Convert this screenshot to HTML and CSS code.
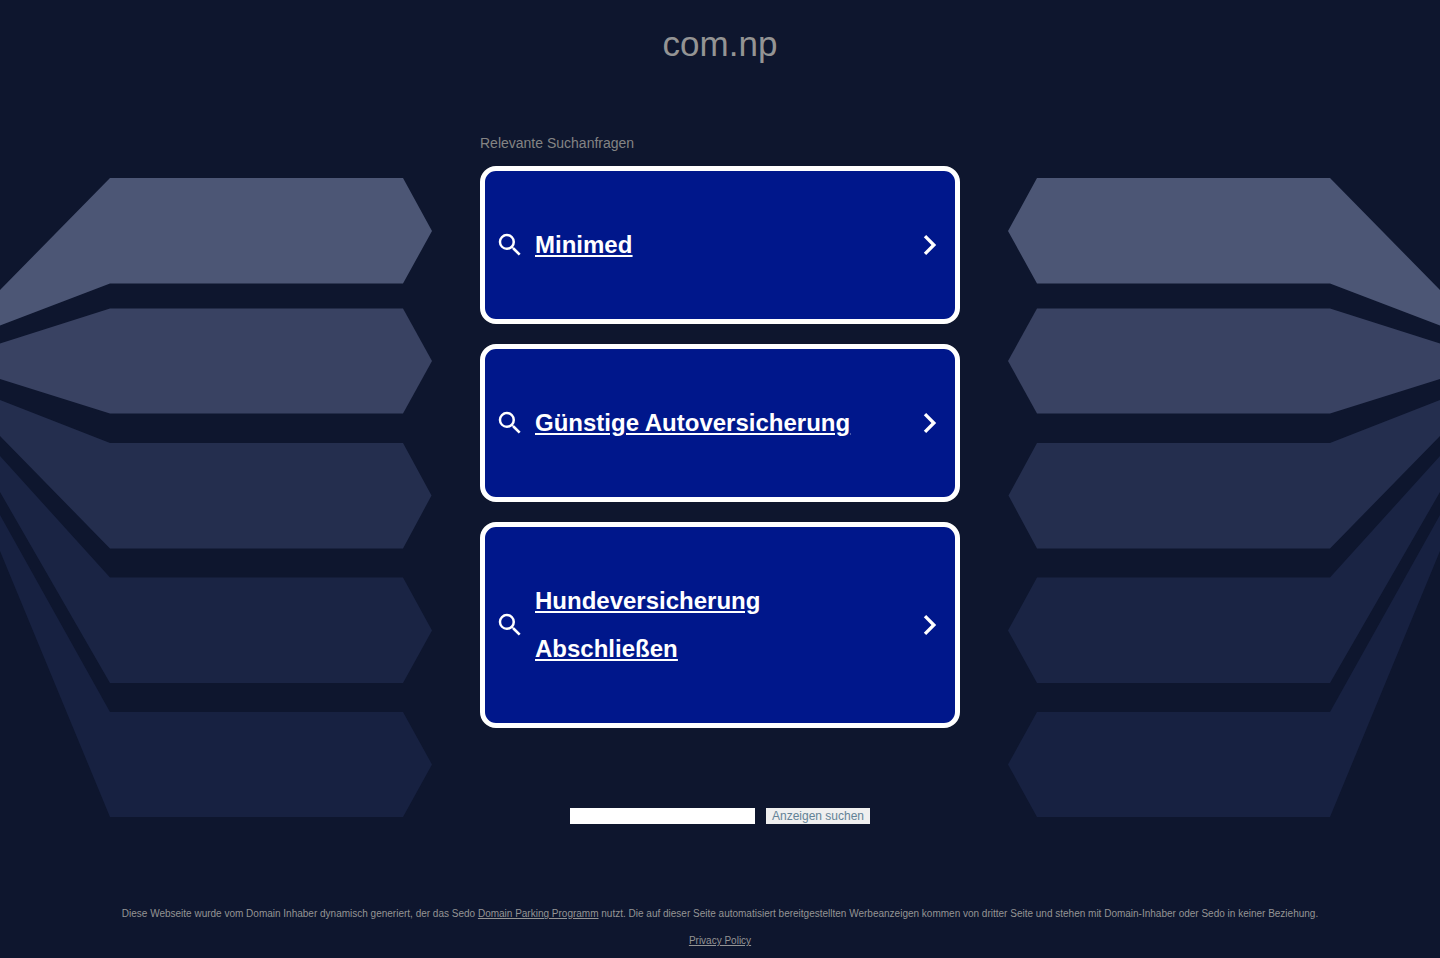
FILE: index.html
```html
<!DOCTYPE html>
<html lang="de">
<head>
<meta charset="utf-8">
<meta name="viewport" content="width=device-width, initial-scale=1">
<title>com.np</title>
<link rel="stylesheet" href="styles.css">
</head>
<body>
<svg class="defs" width="0" height="0" aria-hidden="true">
  <symbol id="arrows" viewBox="0 0 432 640">
    <path fill="#4c5675" d="M0 112 110 0H403L432 53 403 105.500H110L0 147.500z"/>
    <path fill="#394262" d="M0 165.500 110 130.500H403L432 183 403 235.500H110L0 201z"/>
    <path fill="#242e4e" d="M0 222 110 265H403L431.500 317.500 403 370.500H110L0 258z"/>
    <path fill="#1a2444" d="M0 278 110 399.500H403L432 452.500 403 505H110L0 314z"/>
    <path fill="#172141" d="M0 337 110 534H403L432 586.500 403 639H110L0 373z"/>
  </symbol>
  <symbol id="search" viewBox="0 0 24 24">
    <path d="M15.500 14h-.79l-.28-.27A6.471 6.471 0 0 0 16 9.500 6.500 6.500 0 1 0 9.500 16c1.610 0 3.090-.59 4.230-1.570l.27.28v.79l5 4.990L20.490 19l-4.990-5zm-6 0C7.010 14 5 11.990 5 9.500S7.010 5 9.500 5 14 7.010 14 9.500 11.990 14 9.500 14z"/>
  </symbol>
  <symbol id="chevron" viewBox="3.300 3 18 18">
    <path d="M10 6 8.590 7.410 13.170 12l-4.580 4.590L10 18l6-6z"/>
  </symbol>
</svg>
<header class="banner">
  <h1 class="domain">com.np</h1>
</header>
<div class="content">
  <svg class="arrows" viewBox="0 0 432 640" aria-hidden="true"><use href="#arrows"/></svg>
  <main class="results">
    <h2 class="label">Relevante Suchanfragen</h2>
    <nav class="list">
      <a class="card" href="#"><svg class="icon" aria-hidden="true"><use href="#search"/></svg><span class="term">Minimed</span><svg class="icon" aria-hidden="true"><use href="#chevron"/></svg></a>
      <a class="card" href="#"><svg class="icon" aria-hidden="true"><use href="#search"/></svg><span class="term">Günstige Autoversicherung</span><svg class="icon" aria-hidden="true"><use href="#chevron"/></svg></a>
      <a class="card" href="#"><svg class="icon" aria-hidden="true"><use href="#search"/></svg><span class="term">Hundeversicherung Abschließen</span><svg class="icon" aria-hidden="true"><use href="#chevron"/></svg></a>
    </nav>
    <form class="search">
      <input class="field" type="text" name="q" aria-label="Suchbegriff">
      <button class="submit" type="submit">Anzeigen suchen</button>
    </form>
  </main>
  <svg class="arrows flipped" viewBox="0 0 432 640" aria-hidden="true"><use href="#arrows"/></svg>
</div>
<footer class="footer">
  <p class="note">Diese Webseite wurde vom Domain Inhaber dynamisch generiert, der das Sedo <a class="link" href="#">Domain Parking Programm</a> nutzt. Die auf dieser Seite automatisiert bereitgestellten Werbeanzeigen kommen von dritter Seite und stehen mit Domain-Inhaber oder Sedo in keiner Beziehung.</p>
  <p class="note"><a class="link" href="#">Privacy Policy</a></p>
</footer>
</body>
</html>
```
FILE: styles.css
```css
* {
  box-sizing: border-box;
}

body {
  margin: 0;
  background: #0e162e;
  color: #949494;
  font-family: "Liberation Sans", Arial, sans-serif;
}

.defs {
  display: block;
}

.banner {
  padding: 24px 16px;
  text-align: center;
}

.domain {
  margin: 0;
  font-size: 35px;
  font-weight: 400;
  line-height: 40px;
}

.content {
  display: grid;
  grid-template-columns: 30% minmax(0, 480px) 30%;
  justify-content: space-between;
  align-items: start;
  padding-top: 47px;
}

.arrows {
  display: block;
  width: 100%;
  margin-top: 43px;
}

.flipped {
  transform: scaleX(-1);
}

.label {
  margin: 0 0 15px;
  color: #848484;
  font-size: 14px;
  font-weight: 400;
  line-height: 16px;
}

.list {
  display: grid;
  gap: 20px;
}

.card {
  display: flex;
  align-items: center;
  gap: 10px;
  padding: 50px 10px;
  border: 5px solid #fff;
  border-radius: 16px;
  background: #00178b;
  color: #fff;
}

.icon {
  flex: none;
  width: 30px;
  height: 30px;
  fill: currentColor;
}

.term {
  flex: 1;
  font-size: 24px;
  font-weight: 700;
  line-height: 48px;
  text-decoration: underline;
}

.search {
  display: flex;
  justify-content: center;
  gap: 11px;
  margin-top: 80px;
}

.field {
  width: 185px;
  height: 16px;
  padding: 0 6px;
  border: 0;
  background: #fff;
  font: 12px/16px "Liberation Sans", Arial, sans-serif;
}

.submit {
  padding: 0 6px;
  border: 0;
  background: #efefef;
  color: #638296;
  font: 12px/16px "Liberation Sans", Arial, sans-serif;
}

.footer {
  display: grid;
  gap: 15px;
  padding: 84px 16px 11px;
  text-align: center;
}

.note {
  margin: 0;
  font-size: 10px;
  line-height: 12px;
}

.link {
  color: inherit;
}
```
